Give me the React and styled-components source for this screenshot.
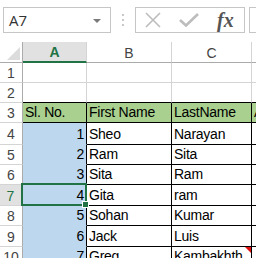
import React from "react";
import styled, { createGlobalStyle } from "styled-components";

const GlobalStyle = createGlobalStyle`
  html, body { margin: 0; padding: 0; background: #ffffff; }
  body { font-family: "Liberation Sans", Arial, sans-serif; }
`;

const GRID = "#d4d4d4";
const BLACK = "#000000";
const GREEN = "#217346";
const HEAD_GRAY = "#e1e1e1";
const TABLE_GREEN = "#a9d08e";
const BLUE = "#bdd7ee";

const Page = styled.div`
  width: 256px;
  height: 258px;
  overflow: hidden;
  background: #fff;
  display: flex;
  flex-direction: column;
`;

const Toolbar = styled.div`
  display: flex;
  align-items: center;
  height: 26px;
  padding: 7px 0 0 3px;
  margin-bottom: 9px;
`;

const NameBox = styled.div`
  box-sizing: border-box;
  width: 108px;
  height: 26px;
  border: 1px solid #c6c6c6;
  display: flex;
  align-items: center;
  justify-content: space-between;
  padding: 0 9px 0 5px;
  font-family: "Open Sans", "Liberation Sans", sans-serif;
  font-size: 15px;
  color: #333;
`;

const Arrow = styled.span`
  width: 0;
  height: 0;
  border-left: 4px solid transparent;
  border-right: 4px solid transparent;
  border-top: 4px solid #7a7a7a;
  margin-top: 1px;
`;

const Dots = styled.div`
  width: 24px;
  display: flex;
  flex-direction: column;
  align-items: center;
  gap: 3px;
`;

const Dot = styled.span`
  width: 2px;
  height: 2px;
  background: #c8c8c8;
`;

const FxBox = styled.div`
  box-sizing: border-box;
  width: 110px;
  height: 26px;
  border: 1px solid #c6c6c6;
  display: flex;
  align-items: center;
  padding-left: 8px;
  gap: 17px;
`;

const FxText = styled.span`
  font-family: "Liberation Serif", "Times New Roman", serif;
  font-style: italic;
  font-weight: bold;
  font-size: 20px;
  color: #555;
  margin-left: 1px;
`;

const FormulaInput = styled.div`
  box-sizing: border-box;
  flex: 1;
  height: 26px;
  margin-left: 4px;
  border: 1px solid #c6c6c6;
  border-right: none;
`;

const Sheet = styled.div`
  display: grid;
  grid-template-columns: 23px 64px 85px 80px 40px;
  grid-template-rows: 21px 20px 20px 20px 22px 20px 20px 21px 20px 21px 20px;
`;

const Corner = styled.div`
  box-sizing: border-box;
  position: relative;
  border-right: 1px solid #ababab;
  border-bottom: 1px solid #ababab;
  background: #fff;
`;

const ColHead = styled.div`
  box-sizing: border-box;
  display: flex;
  align-items: center;
  justify-content: center;
  font-size: 14px;
  padding-top: 1px;
  background: ${(p) => (p.$active ? HEAD_GRAY : "#fff")};
  color: ${(p) => (p.$active ? GREEN : "#444")};
  font-weight: ${(p) => (p.$active ? "bold" : "normal")};
  border-right: 1px solid ${GRID};
  border-bottom: ${(p) => (p.$active ? `2px solid ${GREEN}` : "1px solid #ababab")};
`;

const RowHead = styled.div`
  box-sizing: border-box;
  display: flex;
  align-items: center;
  justify-content: center;
  font-size: 14px;
  padding-top: 1px;
  background: ${(p) => (p.$active ? HEAD_GRAY : "#fff")};
  color: ${(p) => (p.$active ? GREEN : "#444")};
  border-right: ${(p) => (p.$active ? `2px solid ${GREEN}` : "1px solid #ababab")};
  border-bottom: 1px solid ${GRID};
`;

const Cell = styled.div`
  box-sizing: border-box;
  position: relative;
  display: flex;
  align-items: flex-end;
  justify-content: ${(p) => (p.$right ? "flex-end" : "flex-start")};
  padding: 0 2px 2px 2px;
  font-size: 14px;
  letter-spacing: -0.25px;
  line-height: 15px;
  color: #000;
  white-space: nowrap;
  background: ${(p) => p.$bg || "#fff"};
  border-right: 1px solid ${(p) => p.$rb || GRID};
  border-bottom: 1px solid ${(p) => p.$bb || GRID};
`;

const ActiveFrame = styled.div`
  position: absolute;
  left: -2px;
  top: -2px;
  right: -1px;
  bottom: -1px;
  border: 2px solid ${GREEN};
  pointer-events: none;
  z-index: 2;
`;

const FillHandle = styled.span`
  position: absolute;
  right: -4px;
  bottom: -4px;
  width: 5px;
  height: 5px;
  background: ${GREEN};
  border: 1px solid #fff;
  z-index: 3;
`;

const CommentMark = styled.span`
  position: absolute;
  top: 0;
  right: 0;
  width: 0;
  height: 0;
  border-top: 6px solid #e01010;
  border-left: 6px solid transparent;
  z-index: 2;
`;

const CancelIcon = () => (
  <svg width="18" height="16" viewBox="0 0 18 16">
    <path d="M2 1 L16 15 M16 1 L2 15" stroke="#bdbdbd" strokeWidth="1.6" fill="none" />
  </svg>
);

const CheckIcon = () => (
  <svg width="20" height="14" viewBox="0 0 20 14">
    <path d="M1 7 L7 12.5 L19 1" stroke="#bdbdbd" strokeWidth="2.6" fill="none" />
  </svg>
);

const CornerTriangle = () => (
  <svg width="23" height="21" viewBox="0 0 23 21" style={{ position: "absolute", left: 0, top: 0 }}>
    <polygon points="20,5 20,18 7,18" fill="#dcdcdc" />
  </svg>
);

const rows = [
  { n: 1, kind: "empty", cells: ["", "", "", ""] },
  { n: 2, kind: "above", cells: ["", "", "", ""] },
  { n: 3, kind: "head", cells: ["Sl. No.", "First Name", "LastName", "Age"] },
  { n: 4, kind: "data", cells: ["1", "Sheo", "Narayan", ""] },
  { n: 5, kind: "data", cells: ["2", "Ram", "Sita", ""] },
  { n: 6, kind: "data", cells: ["3", "Sita", "Ram", ""] },
  { n: 7, kind: "data", cells: ["4", "Gita", "ram", ""], active: true },
  { n: 8, kind: "data", cells: ["5", "Sohan", "Kumar", ""] },
  { n: 9, kind: "data", cells: ["6", "Jack", "Luis", ""] },
  { n: 10, kind: "data", cells: ["7", "Greg", "Kambakhth", ""], comment: true },
];

function cellProps(kind, col) {
  if (kind === "above") return { $bb: BLACK };
  if (kind === "head") return { $bg: TABLE_GREEN, $rb: BLACK, $bb: BLACK };
  if (kind === "data") {
    if (col === 0) return { $bg: BLUE, $rb: BLACK, $bb: BLUE, $right: true };
    return { $rb: BLACK, $bb: BLACK };
  }
  return {};
}

export default function App() {
  return (
    <Page>
      <GlobalStyle />
      <Toolbar>
        <NameBox>
          <span>A7</span>
          <Arrow />
        </NameBox>
        <Dots>
          <Dot />
          <Dot />
          <Dot />
        </Dots>
        <FxBox>
          <CancelIcon />
          <CheckIcon />
          <FxText>fx</FxText>
        </FxBox>
        <FormulaInput />
      </Toolbar>
      <Sheet>
        <Corner>
          <CornerTriangle />
        </Corner>
        <ColHead $active>A</ColHead>
        <ColHead>B</ColHead>
        <ColHead>C</ColHead>
        <ColHead />
        {rows.map((r) => (
          <React.Fragment key={r.n}>
            <RowHead $active={r.active}>{r.n}</RowHead>
            {r.cells.map((c, i) => (
              <Cell key={i} {...cellProps(r.kind, i)}>
                {c}
                {r.active && i === 0 && (
                  <ActiveFrame>
                    <FillHandle />
                  </ActiveFrame>
                )}
                {r.comment && i === 2 && <CommentMark />}
              </Cell>
            ))}
          </React.Fragment>
        ))}
      </Sheet>
    </Page>
  );
}
